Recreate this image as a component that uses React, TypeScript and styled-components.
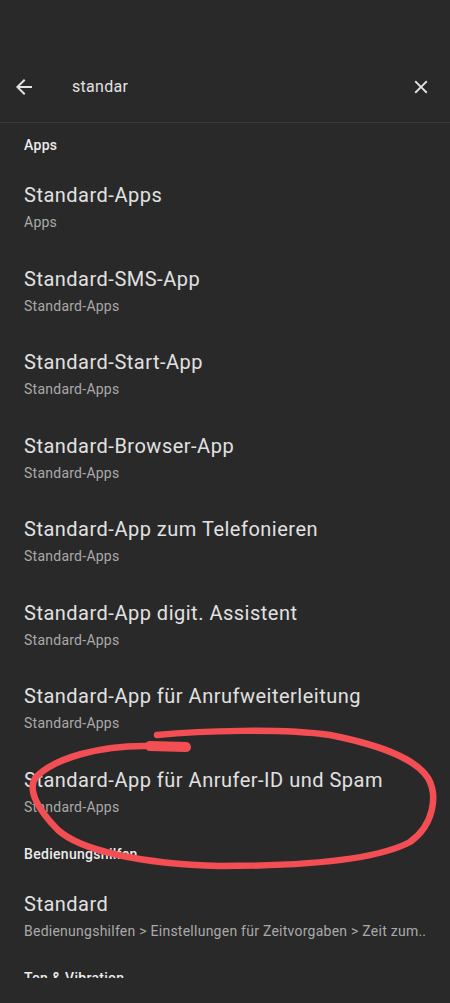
import React from "react";
import styled, { createGlobalStyle } from "styled-components";

const GlobalStyle = createGlobalStyle`
  html, body {
    margin: 0;
    padding: 0;
    background: #292929;
  }
  * {
    box-sizing: border-box;
  }
`;

const Screen = styled.div`
  position: relative;
  width: 450px;
  height: 1003px;
  background: #292929;
  font-family: Roboto, "Noto Sans", sans-serif;
  display: flex;
  flex-direction: column;
  overflow: hidden;
`;

const StatusSpace = styled.div`
  height: 51px;
  flex-shrink: 0;
`;

const SearchBar = styled.div`
  height: 72px;
  display: flex;
  align-items: center;
  padding: 0 18px 0 12px;
  border-bottom: 1px solid #3b3b3b;
  flex-shrink: 0;
`;

const IconButton = styled.div<{ $size: number }>`
  width: ${(p) => p.$size}px;
  height: ${(p) => p.$size}px;
  display: flex;
  align-items: center;
  justify-content: center;
  color: #e3e3e3;
  flex-shrink: 0;
`;

const Query = styled.div`
  flex: 1;
  margin-left: 36px;
  color: #e2e2e2;
  font-size: 16px;
  letter-spacing: 0.3px;
`;

const Results = styled.div`
  height: 855px;
  overflow: hidden;
  flex-shrink: 0;
`;

const SectionHeader = styled.div<{ $top: number }>`
  padding: ${(p) => p.$top}px 24px 8px;
  line-height: 20px;
  font-size: 14px;
  font-weight: 500;
  letter-spacing: 0.3px;
  color: #ececec;
`;

const Item = styled.div`
  padding: 18px 24px 14.5px;
  display: flex;
  flex-direction: column;
`;

const Title = styled.div`
  font-size: 20px;
  line-height: 28px;
  letter-spacing: 0.5px;
  color: #e1e1e1;
  white-space: nowrap;
`;

const Subtitle = styled.div`
  margin-top: 3px;
  font-size: 14px;
  line-height: 20px;
  letter-spacing: 0.25px;
  color: #a9a9a9;
  white-space: nowrap;
  overflow: hidden;
`;

const Scribble = styled.svg`
  position: absolute;
  left: 0;
  top: 0;
  width: 450px;
  height: 1003px;
  pointer-events: none;
`;

const apps = [
  ["Standard-Apps", "Apps"],
  ["Standard-SMS-App", "Standard-Apps"],
  ["Standard-Start-App", "Standard-Apps"],
  ["Standard-Browser-App", "Standard-Apps"],
  ["Standard-App zum Telefonieren", "Standard-Apps"],
  ["Standard-App digit. Assistent", "Standard-Apps"],
  ["Standard-App für Anrufweiterleitung", "Standard-Apps"],
  ["Standard-App für Anrufer-ID und Spam", "Standard-Apps"],
];

function App() {
  return (
    <Screen>
      <GlobalStyle />
      <StatusSpace />
      <SearchBar>
        <IconButton $size={24}>
          <svg width="24" height="24" viewBox="0 0 24 24" fill="currentColor">
            <path d="M20 11H7.83l5.59-5.59L12 4l-8 8 8 8 1.41-1.41L7.83 13H20v-2z" />
          </svg>
        </IconButton>
        <Query>standar</Query>
        <IconButton $size={22}>
          <svg width="22" height="22" viewBox="0 0 24 24" fill="currentColor">
            <path d="M19 6.41L17.59 5 12 10.59 6.41 5 5 6.41 10.59 12 5 17.59 6.41 19 12 13.41 17.59 19 19 17.59 13.41 12z" />
          </svg>
        </IconButton>
      </SearchBar>
      <Results>
        <SectionHeader $top={12}>Apps</SectionHeader>
        {apps.map(([t, s]) => (
          <Item key={t}>
            <Title>{t}</Title>
            <Subtitle>{s}</Subtitle>
          </Item>
        ))}
        <SectionHeader $top={13}>Bedienungshilfen</SectionHeader>
        <Item>
          <Title>Standard</Title>
          <Subtitle>Bedienungshilfen &gt; Einstellungen für Zeitvorgaben &gt; Zeit zum..</Subtitle>
        </Item>
        <SectionHeader $top={12.5}>Ton &amp; Vibration</SectionHeader>
      </Results>
      <Scribble viewBox="0 0 450 1003">
        <path
          d="M157 735 C 200 731, 280 728, 330 735 C 380 745, 415 758, 428 778 C 438 795, 434 825, 410 842 C 380 858, 320 866, 220 866 C 140 864, 80 850, 58 830 C 40 812, 26 790, 36 777 C 55 758, 100 745, 150 746"
          fill="none"
          stroke="#f24e54"
          strokeWidth="6.5"
          strokeLinecap="round"
          strokeLinejoin="round"
        />
        <path d="M150 746 L 186 747" stroke="#f24e54" strokeWidth="10" strokeLinecap="round" />
      </Scribble>
    </Screen>
  );
}

export default App;
